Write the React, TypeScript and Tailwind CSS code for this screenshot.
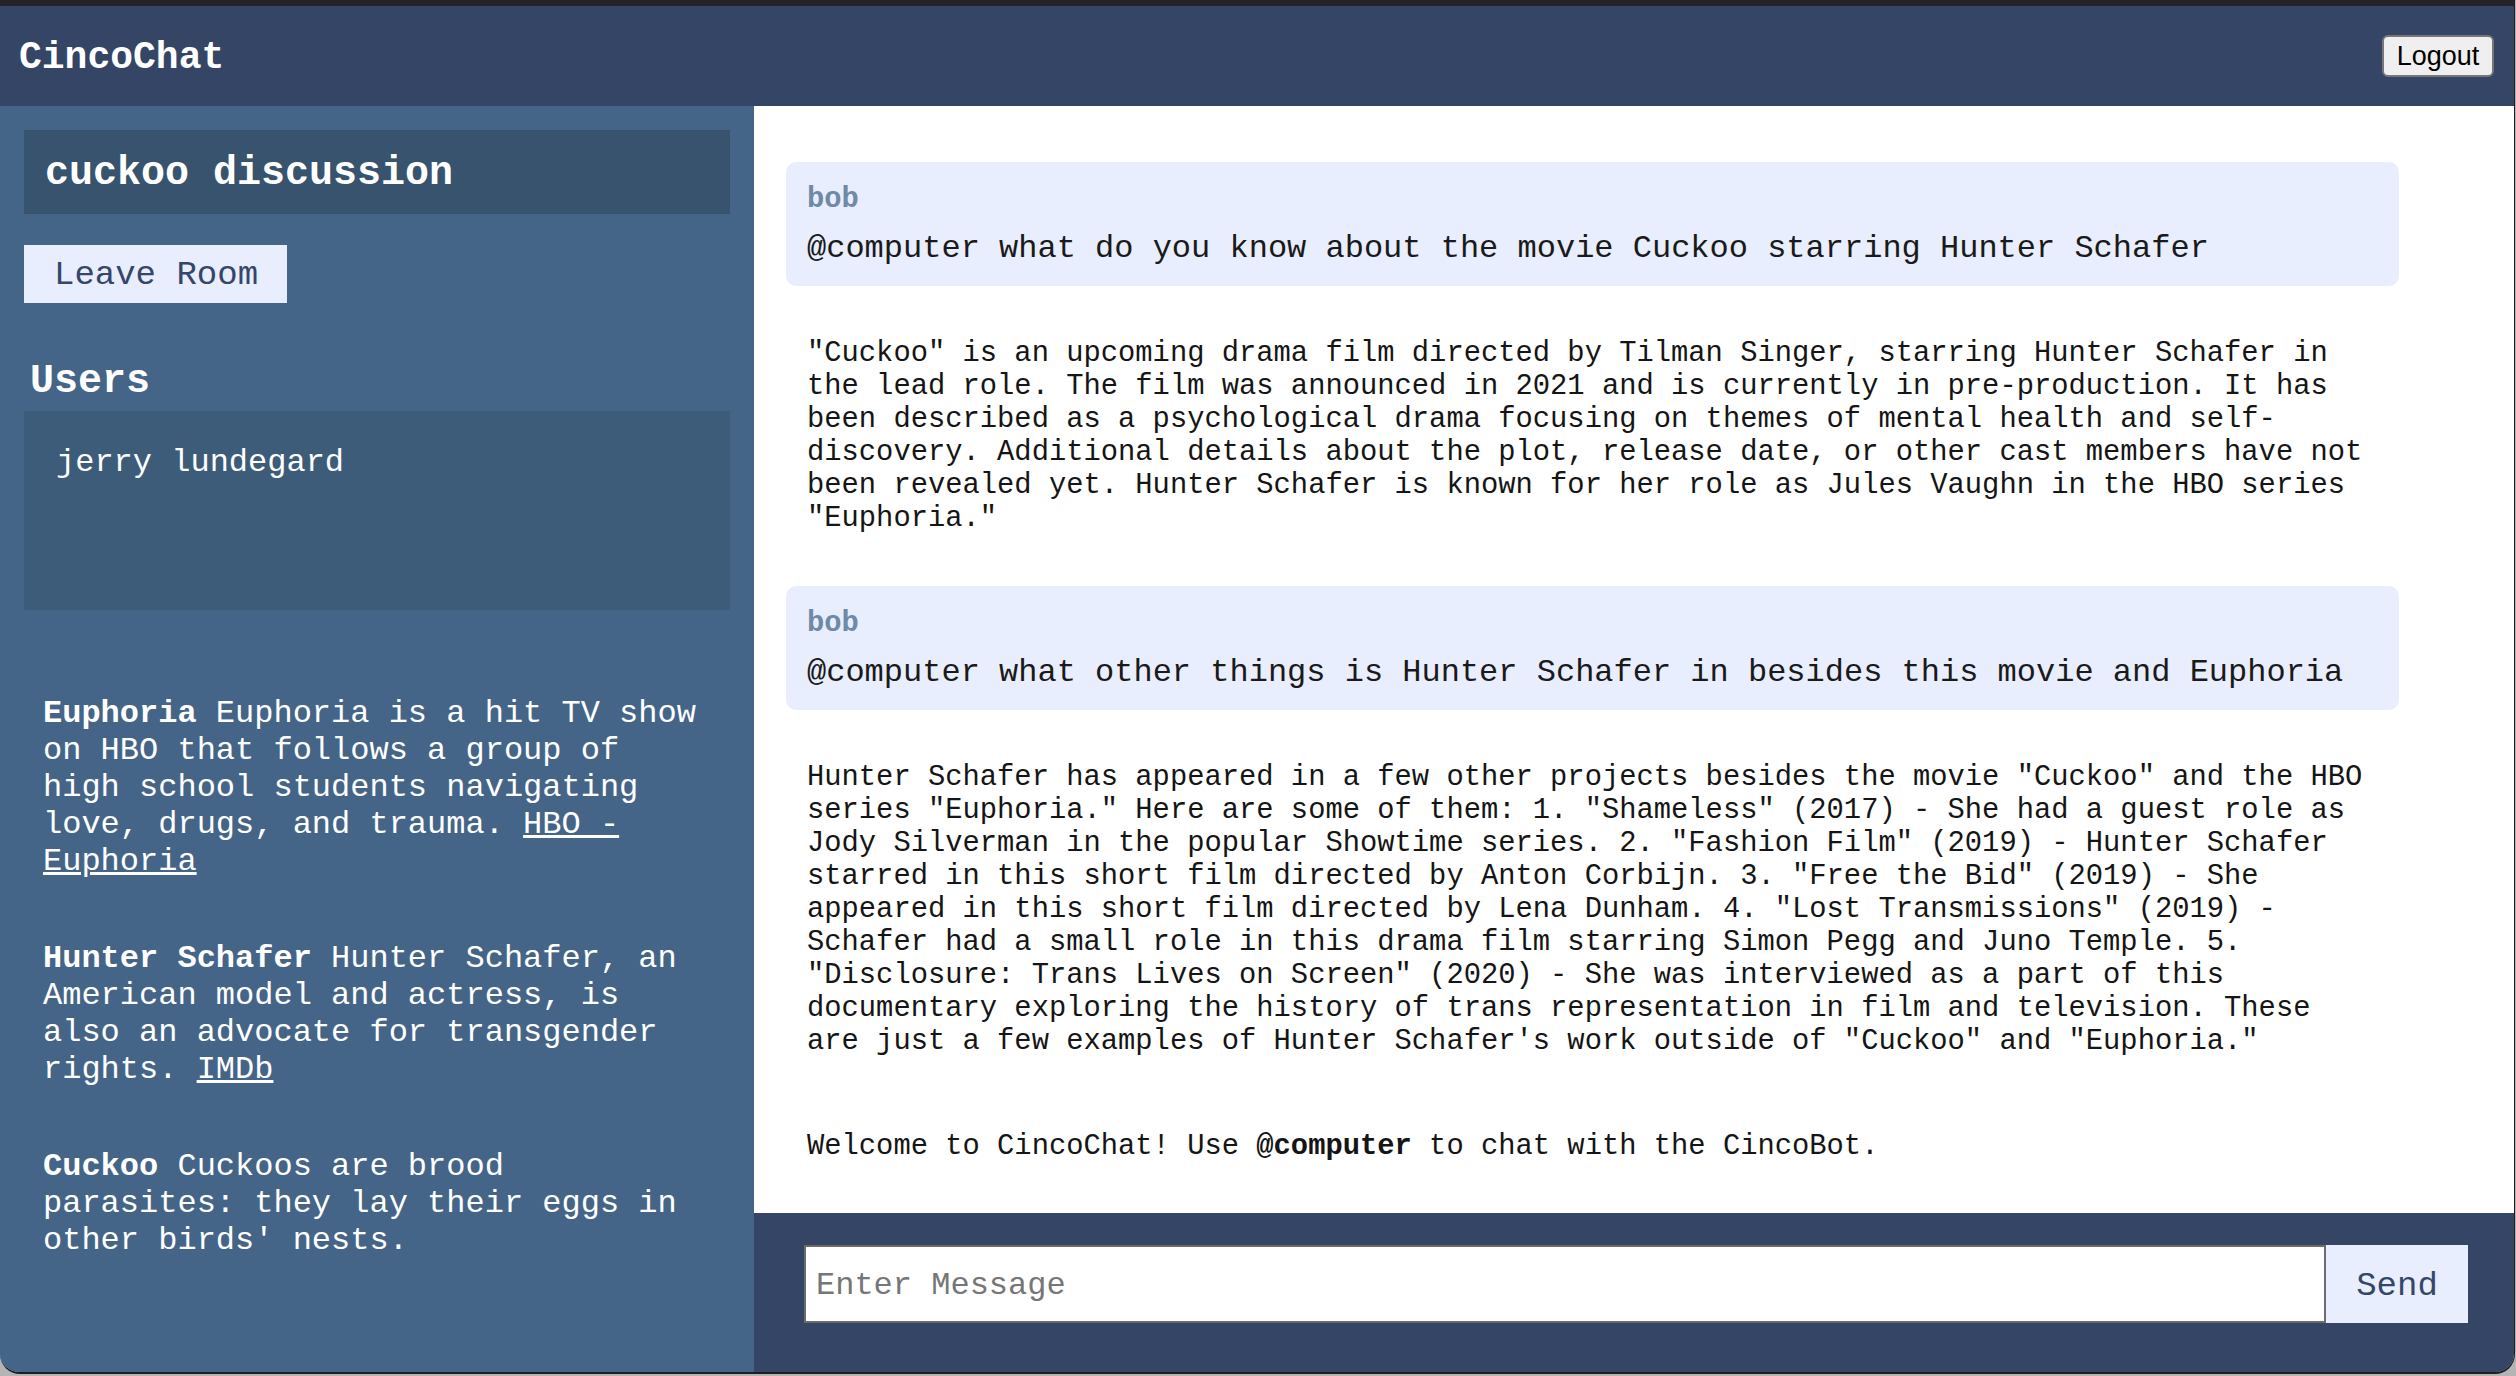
import { useState } from 'react'

const mono = "font-['Liberation_Mono','Courier_New',monospace]"

const facts = [
  {
    title: 'Euphoria',
    text: 'Euphoria is a hit TV show on HBO that follows a group of high school students navigating love, drugs, and trauma.',
    link: 'HBO - Euphoria',
  },
  {
    title: 'Hunter Schafer',
    text: 'Hunter Schafer, an American model and actress, is also an advocate for transgender rights.',
    link: 'IMDb',
  },
  {
    title: 'Cuckoo',
    text: "Cuckoos are brood parasites: they lay their eggs in other birds' nests.",
    link: '',
  },
]

type Msg = { kind: 'user' | 'bot'; user?: string; text: string; gap: string }

const messages: Msg[] = [
  {
    kind: 'user',
    user: 'bob',
    text: '@computer what do you know about the movie Cuckoo starring Hunter Schafer',
    gap: 'mt-0',
  },
  {
    kind: 'bot',
    text: '"Cuckoo" is an upcoming drama film directed by Tilman Singer, starring Hunter Schafer in the lead role. The film was announced in 2021 and is currently in pre-production. It has been described as a psychological drama focusing on themes of mental health and self-discovery. Additional details about the plot, release date, or other cast members have not been revealed yet. Hunter Schafer is known for her role as Jules Vaughn in the HBO series "Euphoria."',
    gap: 'mt-[51px]',
  },
  {
    kind: 'user',
    user: 'bob',
    text: '@computer what other things is Hunter Schafer in besides this movie and Euphoria',
    gap: 'mt-[51px]',
  },
  {
    kind: 'bot',
    text: 'Hunter Schafer has appeared in a few other projects besides the movie "Cuckoo" and the HBO series "Euphoria." Here are some of them: 1. "Shameless" (2017) - She had a guest role as Jody Silverman in the popular Showtime series. 2. "Fashion Film" (2019) - Hunter Schafer starred in this short film directed by Anton Corbijn. 3. "Free the Bid" (2019) - She appeared in this short film directed by Lena Dunham. 4. "Lost Transmissions" (2019) - Schafer had a small role in this drama film starring Simon Pegg and Juno Temple. 5. "Disclosure: Trans Lives on Screen" (2020) - She was interviewed as a part of this documentary exploring the history of trans representation in film and television. These are just a few examples of Hunter Schafer\'s work outside of "Cuckoo" and "Euphoria."',
    gap: 'mt-[51px]',
  },
]

function Sidebar() {
  return (
    <div className="w-[754px] shrink-0 bg-[#446587] px-[24px] pt-[24px] text-white">
      <div className="flex h-[84px] items-center bg-[#37536e] px-[21px] pt-[3px]">
        <h2 className="text-[40px] font-bold leading-[46px]">cuckoo discussion</h2>
      </div>
      <button className="mt-[31px] flex h-[58px] w-[263px] items-center whitespace-nowrap bg-[#e8eefd] px-[30px] pt-[2px] text-[34px] leading-[40px] text-[#34466a]">
        Leave Room
      </button>
      <h3 className="ml-[6px] mt-[56px] text-[40px] font-bold leading-[46px]">Users</h3>
      <div className="mt-[6px] h-[199px] bg-[#3d5c7a] px-[32px] pt-[34px] text-[32px] leading-[36px]">
        jerry lundegard
      </div>
      <div className="mt-[85px] w-[690px] pl-[19px] text-[32px] leading-[37px]">
        {facts.map((f, i) => (
          <p key={f.title} className={i === 0 ? '' : 'mt-[60px]'}>
            <b>{f.title}</b> {f.text}{' '}
            {f.link && <a className="underline">{f.link}</a>}
          </p>
        ))}
      </div>
    </div>
  )
}

function ChatMessage({ m }: { m: Msg }) {
  if (m.kind === 'user') {
    return (
      <div className={`${m.gap} w-[1613px] rounded-[10px] bg-[#e8eefd] px-[21px] pb-[19px] pt-[21px]`}>
        <div className="text-[28.8px] font-bold leading-[33px] text-[#6f89a8]">{m.user}</div>
        <div className="mt-[15px] text-[32px] leading-[36px] text-[#1a1a1a]">{m.text}</div>
      </div>
    )
  }
  return (
    <div className={`${m.gap} w-[1613px] px-[21px] text-[28.8px] leading-[33px] text-[#151515]`}>
      {m.text}
    </div>
  )
}

export default function App() {
  const [draft, setDraft] = useState('')

  return (
    <div className={`h-[1376px] w-[2516px] bg-[#b4b4b4] ${mono}`}>
      <div className="flex h-[1374px] w-[2515px] flex-col overflow-hidden rounded-b-[20px] border-b-2 border-r border-[#1e1e1e]">
        <div className="h-[6px] shrink-0 bg-[#232328]" />
        <header className="flex h-[100px] shrink-0 items-center justify-between bg-[#344566] pl-[19px] pr-[20px]">
          <h1 className="mt-[3px] text-[38px] font-bold leading-[44px] text-white">CincoChat</h1>
          <button className="h-[42px] w-[112px] rounded-[6px] border-2 border-[#767676] bg-[#efefef] font-['Liberation_Sans',Arial,sans-serif] text-[27px] leading-[30px] text-black">
            Logout
          </button>
        </header>

        <div className="flex min-h-0 flex-1">
          <Sidebar />

          <main className="flex min-w-0 flex-1 flex-col">
            <div className="flex-1 bg-white pl-[32px] pt-[56px]">
              {messages.map((m, i) => (
                <ChatMessage key={i} m={m} />
              ))}
              <div className="mt-[72px] px-[21px] text-[28.8px] leading-[33px] text-[#151515]">
                Welcome to CincoChat! Use <b>@computer</b> to chat with the CincoBot.
              </div>
            </div>

            <div className="flex h-[159px] shrink-0 items-start bg-[#344566] pl-[50px] pr-[46px] pt-[32px]">
              <input
                value={draft}
                onChange={(e) => setDraft(e.target.value)}
                placeholder="Enter Message"
                className="h-[78px] flex-1 border-2 border-[#6b6b6b] bg-white pl-[10px] pt-[3px] text-[32px] text-black outline-none placeholder:text-[#767676]"
              />
              <button className="h-[78px] w-[142px] bg-[#e8eefd] pt-[4px] text-[34px] text-[#34466a]">Send</button>
            </div>
          </main>
        </div>
      </div>
    </div>
  )
}
